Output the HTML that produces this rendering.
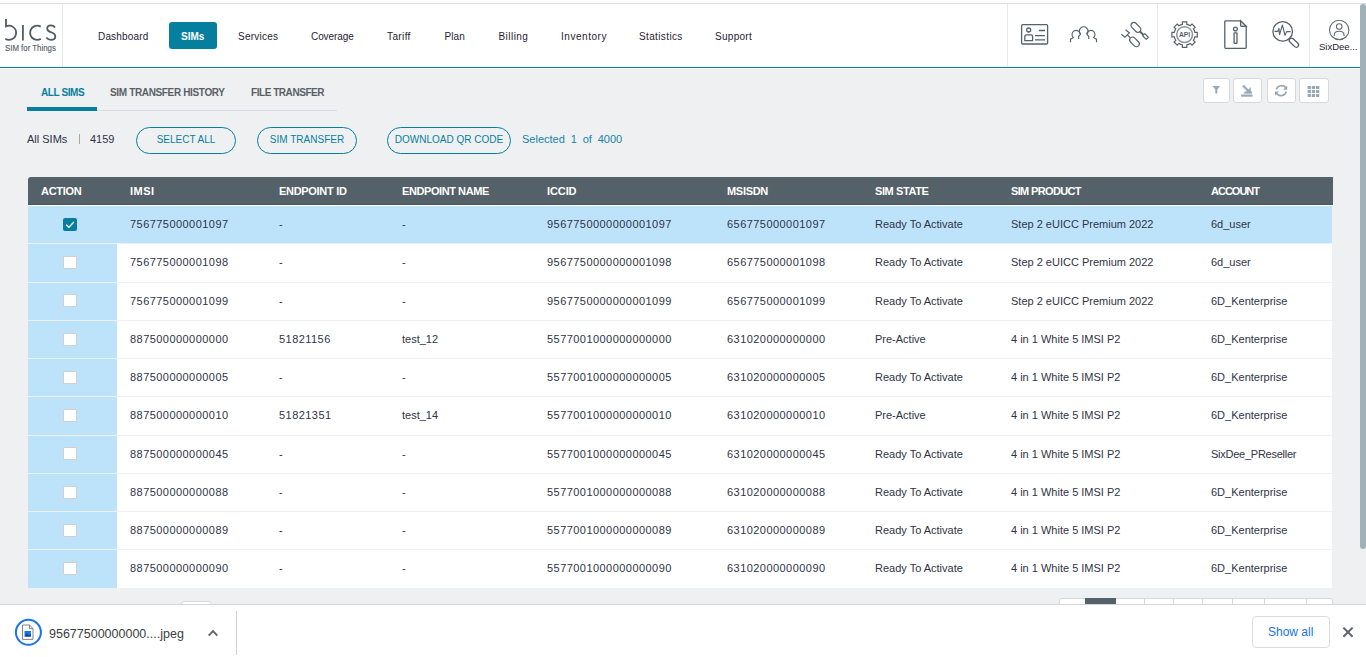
<!DOCTYPE html>
<html><head><meta charset="utf-8"><style>
*{box-sizing:border-box;margin:0;padding:0}
html,body{width:1366px;height:657px;overflow:hidden}
body{background:#eff0f2;font-family:"Liberation Sans", sans-serif;position:relative;color:#333}
.a{position:absolute;white-space:nowrap}
.nav{font-size:10px;line-height:10px;color:#1f2235;top:32px}
.hd{font-size:11px;line-height:11px;color:#fff;font-weight:bold;top:186px;letter-spacing:-0.3px}
.c{font-size:11px;line-height:11px;color:#2f3347}
.n{letter-spacing:0.45px}
.pill{position:absolute;top:127px;height:27px;border:1.5px solid #067f9f;border-radius:14px;color:#067f9f;font-size:10px;line-height:24.5px;text-align:center}
.tb{position:absolute;top:78px;height:25px;background:#fff;border:1px solid #d6d8db;border-radius:3px}
.tb svg{position:absolute;left:0;top:0}
</style></head><body>

<div class="a" style="left:0;top:0;width:1366px;height:3px;background:#fff"></div>
<div class="a" style="left:0;top:3px;width:1366px;height:1px;background:#dcdde0"></div>
<div class="a" style="left:0;top:4px;width:1360px;height:63px;background:#fff"></div>
<div class="a" style="left:0;top:67px;width:1360px;height:1px;background:#067f9f"></div>
<div class="a" style="left:0;top:68px;width:1360px;height:1px;background:#fbf9f8"></div>
<div class="a" style="left:62px;top:4px;width:1px;height:63px;background:#e8eaee"></div>
<div class="a" style="left:1007px;top:4px;width:1px;height:63px;background:#e8eaee"></div>
<div class="a" style="left:1157px;top:4px;width:1px;height:63px;background:#e8eaee"></div>
<div class="a" style="left:1309px;top:4px;width:1px;height:63px;background:#e8eaee"></div>
<svg class="a" style="left:0;top:14px" width="62" height="44" viewBox="0 14 62 44">
<g fill="none" stroke="#505b63" stroke-width="1.8" stroke-linecap="butt">
<path d="M6 19 V26.32 A7.1 7.1 0 1 1 5.24 38.77"/>
<path d="M22.9 24.9 V40.5"/>
<path d="M40.80 26.60 A7.1 7.1 0 1 0 40.80 38.90"/>
<path d="M55 27.4 C53.8 25.6 52 25.4 50.8 25.4 C48.2 25.4 47.1 27.1 47.2 28.8 C47.4 31.1 50.2 31.9 51.8 32.5 C54 33.3 55.5 34.6 55.3 36.8 C55.1 39 53 39.8 50.9 39.8 C48.9 39.8 47.4 38.9 46.4 37.5"/>
</g>
<text x="5" y="51" font-family="Liberation Sans" font-size="8.8" fill="#56616a" stroke="#56616a" stroke-width="0.15" textLength="50.8" lengthAdjust="spacingAndGlyphs">SIM for Things</text>
</svg>
<div class="a nav" style="left:98.0px;letter-spacing:0.17px">Dashboard</div>
<div class="a nav" style="left:238.0px;letter-spacing:0.24px">Services</div>
<div class="a nav" style="left:311.0px;letter-spacing:-0.08px">Coverage</div>
<div class="a nav" style="left:387.0px;letter-spacing:0.38px">Tariff</div>
<div class="a nav" style="left:444.5px;letter-spacing:0.10px">Plan</div>
<div class="a nav" style="left:498.5px;letter-spacing:0.45px">Billing</div>
<div class="a nav" style="left:561.0px;letter-spacing:0.54px">Inventory</div>
<div class="a nav" style="left:639.0px;letter-spacing:0.37px">Statistics</div>
<div class="a nav" style="left:715.0px;letter-spacing:0.28px">Support</div>
<div class="a" style="left:169px;top:22px;width:48px;height:27px;background:#067f9f;border-radius:3px"></div>
<div class="a nav" style="left:181px;color:#fff;font-weight:bold">SIMs</div>
<svg class="a" style="left:1000px;top:0" width="366" height="67" viewBox="1000 0 366 67">
<g fill="none" stroke="#56626a" stroke-width="1.3">
<rect x="1021.6" y="24.6" width="26" height="19.4" rx="1.2"/>
<circle cx="1028.7" cy="30" r="2"/>
<path d="M1024.8 40.6 V36.6 Q1024.8 34.9 1026.5 34.9 H1031 Q1032.6 34.9 1032.6 36.6 V40.6 Z"/>
<path d="M1038.9 30.5 H1045 M1035 35.6 H1045 M1035 39.8 H1045"/>
</g>
<g fill="none" stroke="#56626a" stroke-width="1.15">
<path d="M1070.5 42.3 V39.2 L1073.4 37.7 A4.2 4.2 0 1 1 1080.4 34.2"/>
<path d="M1096.5 42.3 V39.2 L1093.6 37.7 A4.2 4.2 0 1 0 1086.6 34.2"/>
<path d="M1080.6 34.3 A4.4 4.4 0 1 1 1086.8 34.3"/>
<path d="M1080.6 34.3 L1078.7 36.3 V39 M1086.8 34.3 L1088.7 36.3 V39"/>
</g>
<g fill="none" stroke="#56626a" stroke-width="1.2">
<rect x="-5.8" y="-2.9" width="11.6" height="5.8" rx="2.9" transform="translate(1135.9 27.4) rotate(45)"/>
<rect x="-2.6" y="-1.5" width="5.2" height="3" rx="0.4" transform="translate(1145.5 36.5) rotate(45)"/>
<path d="M1140 31.5 L1143.4 34.9" stroke-width="2"/>
<rect x="-5.6" y="-2.9" width="11.2" height="5.8" rx="2.9" transform="translate(1134.5 41.9) rotate(45)"/>
<path d="M1130 37.5 L1127.3 34.9"/>
<path d="M1125.6 29.7 L1129.3 32.9 L1125 37.2 L1121.4 34.2"/>
</g>

<path d="M1182.40 24.33 L1182.40 21.90 L1186.80 21.90 L1186.80 24.33 A10.50 10.50 0 0 1 1190.30 25.78 L1192.02 24.06 L1195.14 27.18 L1193.42 28.90 A10.50 10.50 0 0 1 1194.87 32.40 L1197.30 32.40 L1197.30 36.80 L1194.87 36.80 A10.50 10.50 0 0 1 1193.42 40.30 L1195.14 42.02 L1192.02 45.14 L1190.30 43.42 A10.50 10.50 0 0 1 1186.80 44.87 L1186.80 47.30 L1182.40 47.30 L1182.40 44.87 A10.50 10.50 0 0 1 1178.90 43.42 L1177.18 45.14 L1174.06 42.02 L1175.78 40.30 A10.50 10.50 0 0 1 1174.33 36.80 L1171.90 36.80 L1171.90 32.40 L1174.33 32.40 A10.50 10.50 0 0 1 1175.78 28.90 L1174.06 27.18 L1177.18 24.06 L1178.90 25.78 A10.50 10.50 0 0 1 1182.40 24.33 Z" fill="none" stroke="#56626a" stroke-width="1.2"/>
<circle cx="1184.6" cy="34.6" r="7.9" fill="none" stroke="#8a949a" stroke-width="1.5"/>
<text x="1184.5" y="37" text-anchor="middle" font-family="Liberation Sans" font-weight="bold" font-size="6.4" fill="#56626a" textLength="11.2" lengthAdjust="spacingAndGlyphs">API</text>
<g fill="none" stroke="#56626a" stroke-width="1.3">
<path d="M1240.6 20.8 H1225.6 Q1224.8 20.8 1224.8 21.6 V47.6 Q1224.8 48.3 1225.6 48.3 H1245.4 Q1246.2 48.3 1246.2 47.6 V26.4 Z"/>
<path d="M1240.6 20.8 V25.6 Q1240.6 26.4 1241.4 26.4 H1246.2 Z" fill="#e4e7e9"/>
<circle cx="1235.4" cy="29" r="1.9"/>
<rect x="1234.1" y="32.8" width="2.9" height="10.6" rx="0.4"/>
</g>
<g fill="none" stroke="#56626a" stroke-width="1.3">
<circle cx="1282.7" cy="31.4" r="9.8"/>
<rect x="-5.6" y="-2.3" width="11.2" height="4.6" rx="2.3" transform="translate(1293.9 42.7) rotate(44)"/>
<path d="M1274.4 31.4 H1277.9 L1278.9 28.2 L1279.6 34.6 L1282.4 25 L1285 35.4 L1286.6 31.6 H1290.6" stroke-width="1.1" stroke-linejoin="round"/>
</g>
<g fill="none" stroke="#636d74" stroke-width="1.1">
<circle cx="1339.2" cy="29.9" r="9.7"/>
<circle cx="1339.2" cy="26.5" r="2.8"/>
<path d="M1334.3 35.9 V34.8 Q1334.3 31.2 1339.2 31.2 Q1344 31.2 1344 34.8 V35.9"/>
</g>
</svg>
<div class="a" style="left:1319px;top:42px;font-size:9.5px;line-height:10px;color:#1f2235">SixDee...</div>
<div class="a" style="left:1360px;top:4px;width:6px;height:545px;background:#a2b0b7;border-radius:3px"></div>
<div class="a" style="left:27px;top:110px;width:310px;height:1px;background:#d9dbde"></div>
<div class="a" style="left:27px;top:107px;width:70px;height:4px;background:#067f9f"></div>
<div class="a" style="left:41px;top:88px;font-size:10px;line-height:10px;font-weight:bold;letter-spacing:-0.4px;color:#067f9f">ALL SIMS</div>
<div class="a" style="left:110px;top:88px;font-size:10px;line-height:10px;font-weight:bold;letter-spacing:-0.35px;color:#5a5f66">SIM TRANSFER HISTORY</div>
<div class="a" style="left:251px;top:88px;font-size:10px;line-height:10px;font-weight:bold;letter-spacing:-0.45px;color:#5a5f66">FILE TRANSFER</div>
<div class="a c" style="left:27px;top:134px">All SIMs</div>
<div class="a" style="left:79px;top:134px;width:1px;height:10px;background:#a9a6a6"></div>
<div class="a c" style="left:90px;top:134px">4159</div>
<div class="pill" style="left:136px;width:100px">SELECT ALL</div>
<div class="pill" style="left:257px;width:100px">SIM TRANSFER</div>
<div class="pill" style="left:387px;width:124px">DOWNLOAD QR CODE</div>
<div class="a c" style="left:522px;top:134px;color:#1683a6;word-spacing:2.8px">Selected 1 of 4000</div>
<div class="tb" style="left:1203px;width:27px"><svg width="27" height="25"><path d="M8.5 7 H16.1 L13.3 10.6 V14.6 L11.3 14.6 V10.6 Z" fill="#98a9b5"/></svg></div>
<div class="tb" style="left:1233px;width:29px"><svg width="29" height="25"><g transform="translate(-1 -1.5)"><path d="M8 17 H19.5 V19.2 H8 Z" fill="#98a9b5"/><path d="M10 8 L17 15" stroke="#98a9b5" stroke-width="2.2" fill="none"/><path d="M17.8 9.6 V15.8 H11.6 Z" fill="#98a9b5"/><path d="M10.5 16 H19 V14 H12 Z" fill="#98a9b5"/></g></svg></div>
<div class="tb" style="left:1267px;width:29px"><svg width="29" height="25"><g transform="translate(-1 -1)"><path d="M19.2 10.4 A5.5 5.5 0 0 0 9.2 11.6 M9.2 14.6 A5.5 5.5 0 0 0 19.4 13.6" stroke="#98a9b5" stroke-width="1.7" fill="none"/><path d="M20.2 7.6 V11.8 H16 Z M8 17.6 V13.4 H12.2 Z" fill="#98a9b5"/></g></svg></div>
<div class="tb" style="left:1299px;width:30px"><svg width="30" height="25"><rect x="7.6" y="7.0" width="3.3" height="3" fill="#98a9b5"/><rect x="11.8" y="7.0" width="3.3" height="3" fill="#98a9b5"/><rect x="16.0" y="7.0" width="3.3" height="3" fill="#98a9b5"/><rect x="7.6" y="11.0" width="3.3" height="3" fill="#98a9b5"/><rect x="11.8" y="11.0" width="3.3" height="3" fill="#98a9b5"/><rect x="16.0" y="11.0" width="3.3" height="3" fill="#98a9b5"/><rect x="7.6" y="15.0" width="3.3" height="3" fill="#98a9b5"/><rect x="11.8" y="15.0" width="3.3" height="3" fill="#98a9b5"/><rect x="16.0" y="15.0" width="3.3" height="3" fill="#98a9b5"/></svg></div>
<div class="a" style="left:28px;top:177px;width:1305px;height:28px;background:#556169;border-radius:3px 0 0 0;border-bottom:1px solid #4b575e"></div>
<div class="a" style="left:28px;top:205px;width:1305px;height:1px;background:#fff"></div>
<div class="a hd" style="left:41px;letter-spacing:-0.30px">ACTION</div>
<div class="a hd" style="left:130px;letter-spacing:0.50px">IMSI</div>
<div class="a hd" style="left:279px;letter-spacing:-0.30px">ENDPOINT ID</div>
<div class="a hd" style="left:402px;letter-spacing:-0.42px">ENDPOINT NAME</div>
<div class="a hd" style="left:547px;letter-spacing:-0.10px">ICCID</div>
<div class="a hd" style="left:727px;letter-spacing:-0.30px">MSISDN</div>
<div class="a hd" style="left:875px;letter-spacing:-0.40px">SIM STATE</div>
<div class="a hd" style="left:1011px;letter-spacing:-0.65px">SIM PRODUCT</div>
<div class="a hd" style="left:1211px;letter-spacing:-1.00px">ACCOUNT</div>
<div class="a" style="left:28px;top:206.00px;width:1304px;height:37.25px;background:#bde3fb"></div>
<div class="a" style="left:28px;top:206.00px;width:89px;height:37.25px;background:#bde3fb"></div>
<div class="a" style="left:28px;top:243.25px;width:1304px;height:1px;background:#f0eff4"></div>
<div class="a" style="left:63px;top:217.80px;width:14px;height:13px;background:#067f9f;border-radius:2px"><svg width="14" height="13" style="position:absolute;left:0;top:0"><path d="M3.2 6.8 L5.9 9.3 L10.9 4" stroke="#fff" stroke-width="1.3" fill="none"/></svg></div>
<div class="a c n" style="left:130px;top:219.20px">756775000001097</div>
<div class="a c" style="left:279px;top:219.20px">-</div>
<div class="a c" style="left:402px;top:219.20px">-</div>
<div class="a c n" style="left:547px;top:219.20px">9567750000000001097</div>
<div class="a c n" style="left:727px;top:219.20px">656775000001097</div>
<div class="a c" style="left:875px;top:219.20px">Ready To Activate</div>
<div class="a c" style="left:1011px;top:219.20px">Step 2 eUICC Premium 2022</div>
<div class="a c" style="left:1211px;top:219.20px">6d_user</div>
<div class="a" style="left:28px;top:244.25px;width:1304px;height:37.25px;background:#fff"></div>
<div class="a" style="left:28px;top:244.25px;width:89px;height:37.25px;background:#bde3fb"></div>
<div class="a" style="left:28px;top:281.50px;width:1304px;height:1px;background:#f0eff4"></div>
<div class="a" style="left:63px;top:256.05px;width:14px;height:13px;background:#fff;border:1px solid #d0d0d0;border-radius:1px"></div>
<div class="a c n" style="left:130px;top:257.45px">756775000001098</div>
<div class="a c" style="left:279px;top:257.45px">-</div>
<div class="a c" style="left:402px;top:257.45px">-</div>
<div class="a c n" style="left:547px;top:257.45px">9567750000000001098</div>
<div class="a c n" style="left:727px;top:257.45px">656775000001098</div>
<div class="a c" style="left:875px;top:257.45px">Ready To Activate</div>
<div class="a c" style="left:1011px;top:257.45px">Step 2 eUICC Premium 2022</div>
<div class="a c" style="left:1211px;top:257.45px">6d_user</div>
<div class="a" style="left:28px;top:282.50px;width:1304px;height:37.25px;background:#fff"></div>
<div class="a" style="left:28px;top:282.50px;width:89px;height:37.25px;background:#bde3fb"></div>
<div class="a" style="left:28px;top:319.75px;width:1304px;height:1px;background:#f0eff4"></div>
<div class="a" style="left:63px;top:294.30px;width:14px;height:13px;background:#fff;border:1px solid #d0d0d0;border-radius:1px"></div>
<div class="a c n" style="left:130px;top:295.70px">756775000001099</div>
<div class="a c" style="left:279px;top:295.70px">-</div>
<div class="a c" style="left:402px;top:295.70px">-</div>
<div class="a c n" style="left:547px;top:295.70px">9567750000000001099</div>
<div class="a c n" style="left:727px;top:295.70px">656775000001099</div>
<div class="a c" style="left:875px;top:295.70px">Ready To Activate</div>
<div class="a c" style="left:1011px;top:295.70px">Step 2 eUICC Premium 2022</div>
<div class="a c" style="left:1211px;top:295.70px">6D_Kenterprise</div>
<div class="a" style="left:28px;top:320.75px;width:1304px;height:37.25px;background:#fff"></div>
<div class="a" style="left:28px;top:320.75px;width:89px;height:37.25px;background:#bde3fb"></div>
<div class="a" style="left:28px;top:358.00px;width:1304px;height:1px;background:#f0eff4"></div>
<div class="a" style="left:63px;top:332.55px;width:14px;height:13px;background:#fff;border:1px solid #d0d0d0;border-radius:1px"></div>
<div class="a c n" style="left:130px;top:333.95px">887500000000000</div>
<div class="a c n" style="left:279px;top:333.95px">51821156</div>
<div class="a c" style="left:402px;top:333.95px">test_12</div>
<div class="a c n" style="left:547px;top:333.95px">5577001000000000000</div>
<div class="a c n" style="left:727px;top:333.95px">631020000000000</div>
<div class="a c" style="left:875px;top:333.95px">Pre-Active</div>
<div class="a c" style="left:1011px;top:333.95px">4 in 1 White 5 IMSI P2</div>
<div class="a c" style="left:1211px;top:333.95px">6D_Kenterprise</div>
<div class="a" style="left:28px;top:359.00px;width:1304px;height:37.25px;background:#fff"></div>
<div class="a" style="left:28px;top:359.00px;width:89px;height:37.25px;background:#bde3fb"></div>
<div class="a" style="left:28px;top:396.25px;width:1304px;height:1px;background:#f0eff4"></div>
<div class="a" style="left:63px;top:370.80px;width:14px;height:13px;background:#fff;border:1px solid #d0d0d0;border-radius:1px"></div>
<div class="a c n" style="left:130px;top:372.20px">887500000000005</div>
<div class="a c" style="left:279px;top:372.20px">-</div>
<div class="a c" style="left:402px;top:372.20px">-</div>
<div class="a c n" style="left:547px;top:372.20px">5577001000000000005</div>
<div class="a c n" style="left:727px;top:372.20px">631020000000005</div>
<div class="a c" style="left:875px;top:372.20px">Ready To Activate</div>
<div class="a c" style="left:1011px;top:372.20px">4 in 1 White 5 IMSI P2</div>
<div class="a c" style="left:1211px;top:372.20px">6D_Kenterprise</div>
<div class="a" style="left:28px;top:397.25px;width:1304px;height:37.25px;background:#fff"></div>
<div class="a" style="left:28px;top:397.25px;width:89px;height:37.25px;background:#bde3fb"></div>
<div class="a" style="left:28px;top:434.50px;width:1304px;height:1px;background:#f0eff4"></div>
<div class="a" style="left:63px;top:409.05px;width:14px;height:13px;background:#fff;border:1px solid #d0d0d0;border-radius:1px"></div>
<div class="a c n" style="left:130px;top:410.45px">887500000000010</div>
<div class="a c n" style="left:279px;top:410.45px">51821351</div>
<div class="a c" style="left:402px;top:410.45px">test_14</div>
<div class="a c n" style="left:547px;top:410.45px">5577001000000000010</div>
<div class="a c n" style="left:727px;top:410.45px">631020000000010</div>
<div class="a c" style="left:875px;top:410.45px">Pre-Active</div>
<div class="a c" style="left:1011px;top:410.45px">4 in 1 White 5 IMSI P2</div>
<div class="a c" style="left:1211px;top:410.45px">6D_Kenterprise</div>
<div class="a" style="left:28px;top:435.50px;width:1304px;height:37.25px;background:#fff"></div>
<div class="a" style="left:28px;top:435.50px;width:89px;height:37.25px;background:#bde3fb"></div>
<div class="a" style="left:28px;top:472.75px;width:1304px;height:1px;background:#f0eff4"></div>
<div class="a" style="left:63px;top:447.30px;width:14px;height:13px;background:#fff;border:1px solid #d0d0d0;border-radius:1px"></div>
<div class="a c n" style="left:130px;top:448.70px">887500000000045</div>
<div class="a c" style="left:279px;top:448.70px">-</div>
<div class="a c" style="left:402px;top:448.70px">-</div>
<div class="a c n" style="left:547px;top:448.70px">5577001000000000045</div>
<div class="a c n" style="left:727px;top:448.70px">631020000000045</div>
<div class="a c" style="left:875px;top:448.70px">Ready To Activate</div>
<div class="a c" style="left:1011px;top:448.70px">4 in 1 White 5 IMSI P2</div>
<div class="a c" style="left:1211px;top:448.70px;letter-spacing:-0.25px">SixDee_PReseller</div>
<div class="a" style="left:28px;top:473.75px;width:1304px;height:37.25px;background:#fff"></div>
<div class="a" style="left:28px;top:473.75px;width:89px;height:37.25px;background:#bde3fb"></div>
<div class="a" style="left:28px;top:511.00px;width:1304px;height:1px;background:#f0eff4"></div>
<div class="a" style="left:63px;top:485.55px;width:14px;height:13px;background:#fff;border:1px solid #d0d0d0;border-radius:1px"></div>
<div class="a c n" style="left:130px;top:486.95px">887500000000088</div>
<div class="a c" style="left:279px;top:486.95px">-</div>
<div class="a c" style="left:402px;top:486.95px">-</div>
<div class="a c n" style="left:547px;top:486.95px">5577001000000000088</div>
<div class="a c n" style="left:727px;top:486.95px">631020000000088</div>
<div class="a c" style="left:875px;top:486.95px">Ready To Activate</div>
<div class="a c" style="left:1011px;top:486.95px">4 in 1 White 5 IMSI P2</div>
<div class="a c" style="left:1211px;top:486.95px">6D_Kenterprise</div>
<div class="a" style="left:28px;top:512.00px;width:1304px;height:37.25px;background:#fff"></div>
<div class="a" style="left:28px;top:512.00px;width:89px;height:37.25px;background:#bde3fb"></div>
<div class="a" style="left:28px;top:549.25px;width:1304px;height:1px;background:#f0eff4"></div>
<div class="a" style="left:63px;top:523.80px;width:14px;height:13px;background:#fff;border:1px solid #d0d0d0;border-radius:1px"></div>
<div class="a c n" style="left:130px;top:525.20px">887500000000089</div>
<div class="a c" style="left:279px;top:525.20px">-</div>
<div class="a c" style="left:402px;top:525.20px">-</div>
<div class="a c n" style="left:547px;top:525.20px">5577001000000000089</div>
<div class="a c n" style="left:727px;top:525.20px">631020000000089</div>
<div class="a c" style="left:875px;top:525.20px">Ready To Activate</div>
<div class="a c" style="left:1011px;top:525.20px">4 in 1 White 5 IMSI P2</div>
<div class="a c" style="left:1211px;top:525.20px">6D_Kenterprise</div>
<div class="a" style="left:28px;top:550.25px;width:1304px;height:37.25px;background:#fff"></div>
<div class="a" style="left:28px;top:550.25px;width:89px;height:37.25px;background:#bde3fb"></div>
<div class="a" style="left:63px;top:562.05px;width:14px;height:13px;background:#fff;border:1px solid #d0d0d0;border-radius:1px"></div>
<div class="a c n" style="left:130px;top:563.45px">887500000000090</div>
<div class="a c" style="left:279px;top:563.45px">-</div>
<div class="a c" style="left:402px;top:563.45px">-</div>
<div class="a c n" style="left:547px;top:563.45px">5577001000000000090</div>
<div class="a c n" style="left:727px;top:563.45px">631020000000090</div>
<div class="a c" style="left:875px;top:563.45px">Ready To Activate</div>
<div class="a c" style="left:1011px;top:563.45px">4 in 1 White 5 IMSI P2</div>
<div class="a c" style="left:1211px;top:563.45px">6D_Kenterprise</div>
<div class="a" style="left:181px;top:601px;width:31px;height:6px;background:#fff;border:1px solid #d6d8db;border-radius:3px"></div>
<div class="a" style="left:1059px;top:598px;width:274px;height:10px;background:#fff;border:1px solid #d6d8db;border-radius:3px"></div>
<div class="a" style="left:1085px;top:598px;width:31px;height:10px;background:#556169"></div>
<div class="a" style="left:1144px;top:598px;width:1px;height:8px;background:#d6d8db"></div>
<div class="a" style="left:1173px;top:598px;width:1px;height:8px;background:#d6d8db"></div>
<div class="a" style="left:1202px;top:598px;width:1px;height:8px;background:#d6d8db"></div>
<div class="a" style="left:1232px;top:598px;width:1px;height:8px;background:#d6d8db"></div>
<div class="a" style="left:1264px;top:598px;width:1px;height:8px;background:#d6d8db"></div>
<div class="a" style="left:1306px;top:598px;width:1px;height:8px;background:#d6d8db"></div>
<div class="a" style="left:0;top:604px;width:1366px;height:53px;background:#fff;border-top:1px solid #d4d5d7"></div>
<svg class="a" style="left:0;top:604px" width="260" height="53" viewBox="0 604 260 53">
<circle cx="28.4" cy="632.3" r="12.5" fill="none" stroke="#1a73e8" stroke-width="2"/>
<path d="M22.5 625 H29.4 L33 628.6 V639.4 H22.5 Z" fill="#fff" stroke="#5f6368" stroke-width="0.8"/>
<path d="M29.4 625 V628.6 H33" fill="none" stroke="#5f6368" stroke-width="0.8"/>
<rect x="24.5" y="631" width="6.4" height="5.6" fill="#1a73e8"/>
<path d="M24.5 636.6 L27 633.6 L29 635.4 L30.9 634 V636.6 Z" fill="#0b3d91"/>
<path d="M208.7 635.6 L213 631.2 L217.3 635.6" fill="none" stroke="#5f6368" stroke-width="1.9"/>
<rect x="236" y="611" width="1" height="44" fill="#d0d1d3"/>
</svg>
<div class="a" style="left:49px;top:628px;font-size:12.5px;line-height:13px;color:#3c4043">95677500000000....jpeg</div>
<div class="a" style="left:1252px;top:616px;width:78px;height:32px;border:1px solid #dadce0;border-radius:4px;background:#fff"></div>
<div class="a" style="left:1268px;top:626px;font-size:12px;line-height:13px;color:#1a73e8">Show all</div>
<svg class="a" style="left:1338px;top:623px" width="20" height="20"><path d="M5.4 4.6 L14.6 13.8 M14.6 4.6 L5.4 13.8" stroke="#5f6368" stroke-width="2"/></svg>
</body></html>
